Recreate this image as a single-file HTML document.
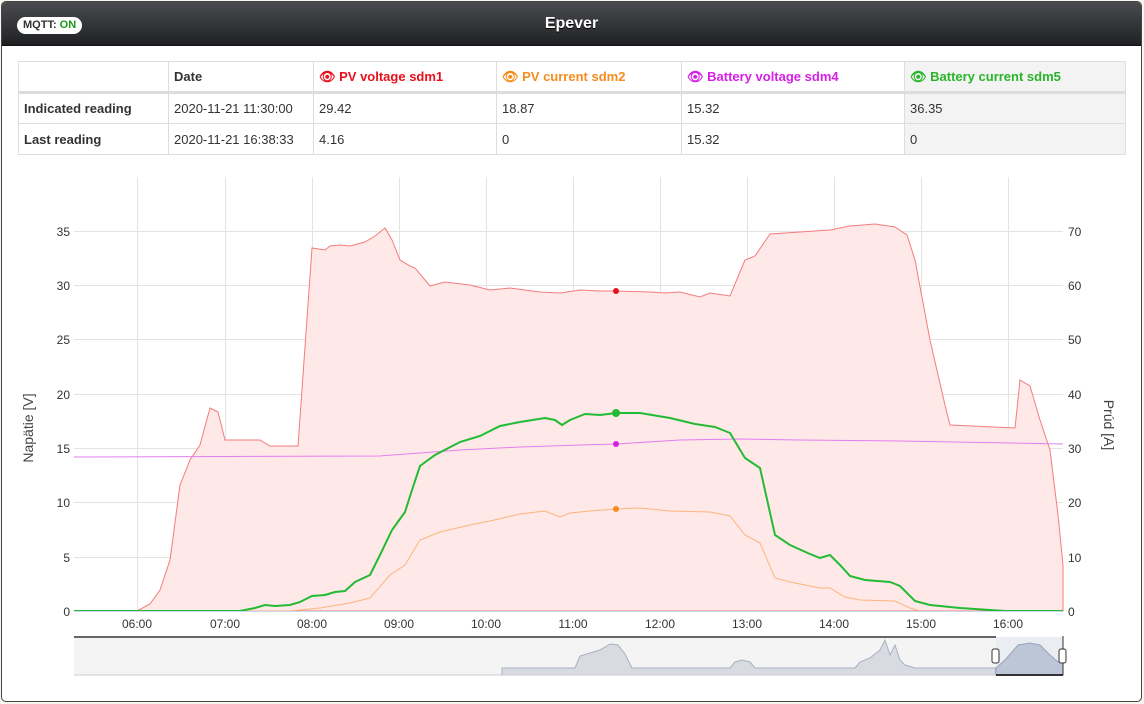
<!DOCTYPE html>
<html><head><meta charset="utf-8"><style>
*{box-sizing:border-box}
body{margin:0;width:1144px;height:704px;background:#f8f6ee;font-family:"Liberation Sans",Arial,sans-serif;font-size:13px;color:#333;overflow:hidden;position:relative}
.frame{position:absolute;left:1px;top:1px;width:1141px;height:701px;border:1px solid #444;border-radius:5px;background:#fff;overflow:hidden}
.hdr{position:absolute;left:0;top:0;width:100%;height:44px;background:linear-gradient(#4a4c50,#1f2022);border-bottom:1px solid #111}
.hdr .t{position:absolute;left:0;right:0;top:13px;text-align:center;color:#fff;font-weight:bold;font-size:16px;text-shadow:0 1px 0 #000}
.mq{position:absolute;left:15px;top:15px;height:17px;padding:0 6px;background:#fff;border-radius:9px;font-size:11px;line-height:17px;font-weight:bold;color:#333}
.mq b{color:#1a9a1a}
table{position:absolute;left:16px;top:59px;border-collapse:collapse;width:1108px}
td{border:1px solid #ddd;height:31px;padding:0 5px;font-size:13px}
tr.h td{font-weight:bold;border-bottom:3px solid #ddd}
td.g{background:#f3f3f3}
svg{position:absolute;left:0;top:0}
</style></head><body>
<div class="frame">
<div class="hdr"><div class="mq">MQTT: <b>ON</b></div><div class="t">Epever</div></div>
<table>
<tr class="h"><td style="width:150px"></td><td style="width:145px">Date</td><td style="width:183px;color:#e8101c">👁 PV voltage sdm1</td><td style="width:185px;color:#f58c1e">👁 PV current sdm2</td><td style="width:223px;color:#d71fe8">👁 Battery voltage sdm4</td><td class="g" style="color:#29b529">👁 Battery current sdm5</td></tr>
<tr><td style="font-weight:bold">Indicated reading</td><td>2020-11-21 11:30:00</td><td>29.42</td><td>18.87</td><td>15.32</td><td class="g">36.35</td></tr>
<tr><td style="font-weight:bold">Last reading</td><td>2020-11-21 16:38:33</td><td>4.16</td><td>0</td><td>15.32</td><td class="g">0</td></tr>
</table>
</div>
<svg width="1144" height="704" font-family="Liberation Sans, Arial, sans-serif" font-size="12" fill="#333">
<g stroke="#e3e3e3" stroke-width="1">
<line x1="74" x2="1063" y1="557.5" y2="557.5"/><line x1="74" x2="1063" y1="502.5" y2="502.5"/><line x1="74" x2="1063" y1="448.5" y2="448.5"/><line x1="74" x2="1063" y1="394.5" y2="394.5"/><line x1="74" x2="1063" y1="339.5" y2="339.5"/><line x1="74" x2="1063" y1="285.5" y2="285.5"/><line x1="74" x2="1063" y1="231.5" y2="231.5"/>
<line y1="177" y2="611" x1="137.5" x2="137.5"/><line y1="177" y2="611" x1="225.5" x2="225.5"/><line y1="177" y2="611" x1="312.5" x2="312.5"/><line y1="177" y2="611" x1="399.5" x2="399.5"/><line y1="177" y2="611" x1="486.5" x2="486.5"/><line y1="177" y2="611" x1="573.5" x2="573.5"/><line y1="177" y2="611" x1="660.5" x2="660.5"/><line y1="177" y2="611" x1="747.5" x2="747.5"/><line y1="177" y2="611" x1="834.5" x2="834.5"/><line y1="177" y2="611" x1="921.5" x2="921.5"/><line y1="177" y2="611" x1="1008.5" x2="1008.5"/>
</g>
<path d="M74,611 L137,611 150,604 160,590 170,560 180,485 190,460 200,445 210,408 218,412 225,440 260,440 270,446 298,446 312,248 325,250 330,246 340,245 350,246 365,242 375,236 385,228 392,240 400,260 410,266 415,268 430,286 445,282 470,285 490,290 510,288 540,292 560,293 580,290 600,291 616,291 650,292 665,293 680,292 700,297 710,293 730,296 745,260 755,256 770,234 800,232 830,230 850,226 875,224 895,227 907,235 915,260 930,340 945,405 950,425 1015,428 1020,380 1030,386 1040,420 1050,450 1058,515 1063,565 L1063,611 Z" fill="#ffe8e8" stroke="#f47c7c" stroke-width="1"/>
<path d="M74,457 L380,456 420,453 460,450 520,447 580,445 616,444 680,440 740,439 800,440 900,441 1063,444" fill="none" stroke="#e67ef0" stroke-width="1"/>
<path d="M74,611 L290,611 320,608 350,603 370,598 390,575 405,565 420,540 440,532 470,525 490,521 520,514 545,511 560,517 570,513 590,511 616,509 640,508 670,511 710,512 730,516 745,535 760,543 775,578 790,582 810,586 820,588 830,588 845,597 860,600 895,601 910,608 920,611" fill="none" stroke="#fbb57c" stroke-width="1"/>
<path d="M74,611 L240,611 255,608 265,605 275,606 290,605 300,602 312,596 325,595 335,592 345,591 355,582 370,575 380,555 392,530 405,512 412,490 420,466 435,455 460,442 480,436 500,426 520,422 545,418 555,420 562,425 570,420 585,414 600,415 616,413 640,413 670,418 695,424 715,427 730,433 745,458 760,468 775,535 790,545 810,554 820,558 830,555 840,565 850,576 865,580 890,582 900,586 915,601 930,605 960,608 990,610 1005,611 1063,611" fill="none" stroke="#22bb33" stroke-width="2"/>
<line x1="74" x2="1063" y1="611.5" y2="611.5" stroke="#ccd6eb"/>
<circle cx="616" cy="291" r="3" fill="#e8101c"/><circle cx="616" cy="444" r="3" fill="#d71fe8"/><circle cx="616" cy="413" r="4" fill="#22bb33"/><circle cx="616" cy="509" r="3" fill="#f58c1e"/>
<g text-anchor="end"><text x="70" y="616">0</text><text x="70" y="562">5</text><text x="70" y="507">10</text><text x="70" y="453">15</text><text x="70" y="399">20</text><text x="70" y="344">25</text><text x="70" y="290">30</text><text x="70" y="236">35</text></g>
<g><text x="1068" y="616">0</text><text x="1068" y="562">10</text><text x="1068" y="507">20</text><text x="1068" y="453">30</text><text x="1068" y="399">40</text><text x="1068" y="344">50</text><text x="1068" y="290">60</text><text x="1068" y="236">70</text></g>
<g text-anchor="middle"><text x="137" y="628">06:00</text><text x="225" y="628">07:00</text><text x="312" y="628">08:00</text><text x="399" y="628">09:00</text><text x="486" y="628">10:00</text><text x="573" y="628">11:00</text><text x="660" y="628">12:00</text><text x="747" y="628">13:00</text><text x="834" y="628">14:00</text><text x="921" y="628">15:00</text><text x="1008" y="628">16:00</text></g>
<text transform="translate(33,428) rotate(-90)" text-anchor="middle" font-size="14" fill="#444">Napätie [V]</text>
<text transform="translate(1104,425) rotate(90)" text-anchor="middle" font-size="14" fill="#444">Prúd [A]</text>
<rect x="74" y="637" width="989" height="38" fill="#f4f4f4"/>
<path d="M502,675 L502,668 575,668 580,656 590,653 600,650 610,644 618,645 625,654 632,668 730,668 735,662 742,660 750,662 755,668 855,668 860,662 870,658 880,650 885,640 890,655 895,645 900,660 905,665 915,668 996,668 L996,675 Z" fill="#d8dbe2" stroke="#aab0c0" stroke-width="1"/>
<path d="M996,675 L996,668 1005,660 1012,652 1018,645 1030,643 1040,645 1050,655 1058,662 1063,660 L1063,675 Z" fill="#a8b2c6" stroke="#6e7c99"/>
<rect x="996" y="637" width="67" height="38" fill="#dde3ee" fill-opacity=".4"/>
<line x1="74" x2="996" y1="637" y2="637" stroke="#666" stroke-width="2"/>
<line x1="996" x2="1063" y1="675" y2="675" stroke="#333" stroke-width="2"/>
<line x1="74" x2="996" y1="675" y2="675" stroke="#ccc"/>
<line x1="1063" x2="1063" y1="636" y2="675" stroke="#333"/>
<rect x="992" y="649" width="7" height="14" rx="2" fill="#fff" stroke="#333"/>
<rect x="1059" y="649" width="7" height="14" rx="2" fill="#fff" stroke="#333"/>
</svg>
</body></html>
